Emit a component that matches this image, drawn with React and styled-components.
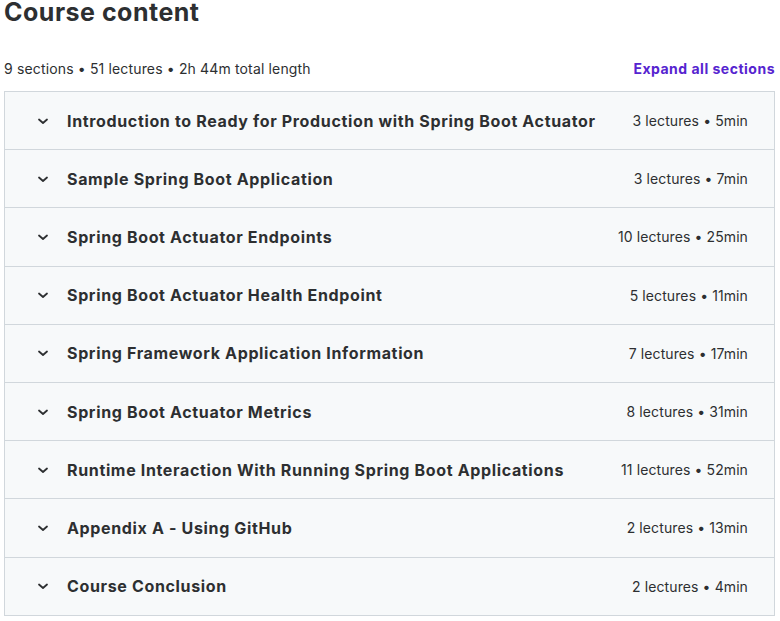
import React from "react";
import styled, { createGlobalStyle } from "styled-components";

const GlobalStyle = createGlobalStyle`
  body {
    margin: 0;
    background: #ffffff;
    font-family: Inter, "Liberation Sans", sans-serif;
    color: #2d2f31;
  }
`;

const SECTIONS = [
  { title: "Introduction to Ready for Production with Spring Boot Actuator", lectures: 3, length: "5min" },
  { title: "Sample Spring Boot Application", lectures: 3, length: "7min" },
  { title: "Spring Boot Actuator Endpoints", lectures: 10, length: "25min" },
  { title: "Spring Boot Actuator Health Endpoint", lectures: 5, length: "11min" },
  { title: "Spring Framework Application Information", lectures: 7, length: "17min" },
  { title: "Spring Boot Actuator Metrics", lectures: 8, length: "31min" },
  { title: "Runtime Interaction With Running Spring Boot Applications", lectures: 11, length: "52min" },
  { title: "Appendix A - Using GitHub", lectures: 2, length: "13min" },
  { title: "Course Conclusion", lectures: 2, length: "4min" },
];

const Wrapper = styled.div`
  width: 780px;
  padding: 0 5px 0 4px;
  box-sizing: border-box;
`;

const Heading = styled.h2`
  margin: 0;
  font-size: 25px;
  line-height: 25px;
  font-weight: 700;
  letter-spacing: 0.5px;
`;

const SummaryBar = styled.div`
  display: flex;
  justify-content: space-between;
  align-items: center;
  margin-top: 33px;
  height: 20px;
`;

const Summary = styled.span`
  font-size: 14px;
  letter-spacing: 0.15px;
`;

const ExpandButton = styled.button`
  border: none;
  background: none;
  padding: 0;
  color: #5624d0;
  font-family: inherit;
  font-size: 14px;
  font-weight: 700;
  letter-spacing: 0.5px;
  cursor: pointer;
`;

const Panel = styled.div`
  margin-top: 13px;
  border: 1px solid #d1d7dc;
  border-top: none;
`;

const Row = styled.div`
  display: flex;
  align-items: center;
  height: 57.2px;
  padding: 0 26px 0 32px;
  background: #f7f9fa;
  border-top: 1px solid #d1d7dc;
`;

const Chevron = styled.svg`
  width: 12px;
  height: 12px;
  flex-shrink: 0;
  margin-right: 18px;
`;

const Title = styled.span`
  flex: 1;
  font-size: 16px;
  font-weight: 700;
  letter-spacing: 0.65px;
`;

const Stats = styled.span`
  font-size: 14px;
  letter-spacing: 0.1px;
  white-space: nowrap;
`;

function App() {
  return (
    <Wrapper>
      <GlobalStyle />
      <Heading>Course content</Heading>
      <SummaryBar>
        <Summary>9 sections • 51 lectures • 2h 44m total length</Summary>
        <ExpandButton>Expand all sections</ExpandButton>
      </SummaryBar>
      <Panel>
        {SECTIONS.map((s) => (
          <Row key={s.title}>
            <Chevron viewBox="0 0 12 12">
              <path d="M2 4.5 L6 8 L10 4.5" fill="none" stroke="#2d2f31" strokeWidth="1.8" strokeLinecap="round" strokeLinejoin="round" />
            </Chevron>
            <Title>{s.title}</Title>
            <Stats>
              {s.lectures} lectures • {s.length}
            </Stats>
          </Row>
        ))}
      </Panel>
    </Wrapper>
  );
}

export default App;
